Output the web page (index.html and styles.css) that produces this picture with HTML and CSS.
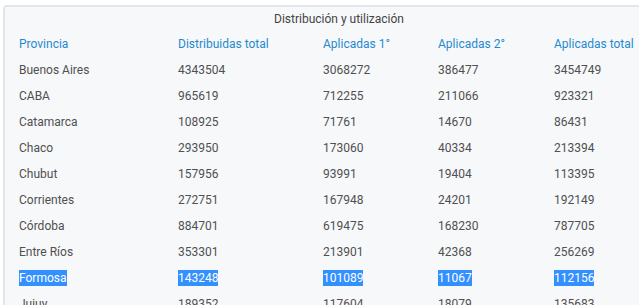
FILE: index.html
```html
<!DOCTYPE html>
<html lang="es">
<head>
<meta charset="utf-8">
<title>Distribución y utilización</title>
<link rel="stylesheet" href="styles.css">
</head>
<body>
<section class="card">
  <h2 class="title">Distribución y utilización</h2>
  <table class="grid">
    <colgroup>
      <col class="c1"><col class="c2"><col class="c3"><col class="c4"><col class="c5">
    </colgroup>
    <thead>
      <tr><th>Provincia</th><th>Distribuidas total</th><th>Aplicadas 1°</th><th>Aplicadas 2°</th><th>Aplicadas total</th></tr>
    </thead>
    <tbody>
      <tr><td>Buenos Aires</td><td>4343504</td><td>3068272</td><td>386477</td><td>3454749</td></tr>
      <tr><td>CABA</td><td>965619</td><td>712255</td><td>211066</td><td>923321</td></tr>
      <tr><td>Catamarca</td><td>108925</td><td>71761</td><td>14670</td><td>86431</td></tr>
      <tr><td>Chaco</td><td>293950</td><td>173060</td><td>40334</td><td>213394</td></tr>
      <tr><td>Chubut</td><td>157956</td><td>93991</td><td>19404</td><td>113395</td></tr>
      <tr><td>Corrientes</td><td>272751</td><td>167948</td><td>24201</td><td>192149</td></tr>
      <tr><td>Córdoba</td><td>884701</td><td>619475</td><td>168230</td><td>787705</td></tr>
      <tr><td>Entre Ríos</td><td>353301</td><td>213901</td><td>42368</td><td>256269</td></tr>
      <tr class="selected"><td><span class="sel">Formosa</span></td><td><span class="sel">143248</span></td><td><span class="sel">101089</span></td><td><span class="sel">11067</span></td><td><span class="sel">112156</span></td></tr>
      <tr><td>Jujuy</td><td>189352</td><td>117604</td><td>18079</td><td>135683</td></tr>
    </tbody>
  </table>
</section>
</body>
</html>
```
FILE: styles.css
```css
html, body {
  margin: 0;
  padding: 0;
  background: #ffffff;
  overflow: hidden;
}
body {
  font-family: Roboto, "Liberation Sans", Arial, sans-serif;
  font-size: 12px;
  color: #505050;
}
.card {
  margin: 5px 0 0 3px;
  width: 672px;
  box-sizing: border-box;
  background: #f7f8fa;
  border: 2px solid #e3e5ee;
  border-radius: 4px;
  padding: 4px 0 20px 14px;
}
.title {
  margin: 0 0 4px 0;
  font-size: 12px;
  font-weight: 400;
  line-height: 16px;
  color: #444444;
  text-align: center;
  padding-right: 14px;
}
.grid {
  border-collapse: collapse;
  table-layout: fixed;
  width: 640px;
}
.c1 { width: 159px; }
.c2 { width: 145px; }
.c3 { width: 115px; }
.c4 { width: 116px; }
.c5 { width: 105px; }
.grid th, .grid td {
  padding: 5px 0;
  line-height: 16px;
  height: 16px;
  text-align: left;
  white-space: nowrap;
  vertical-align: top;
}
.grid th {
  font-weight: 400;
  color: #1f8ace;
}
.grid td {
  color: #505050;
}
.sel {
  display: inline-block;
  height: 16px;
  background: #3390ff;
  color: #ffffff;
}
```
